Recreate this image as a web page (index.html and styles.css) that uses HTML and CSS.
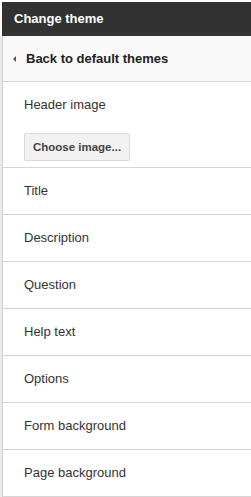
FILE: index.html
```html
<!DOCTYPE html>
<html>
<head>
<meta charset="utf-8">
<link rel="stylesheet" href="styles.css">
</head>
<body>
<div class="page">
  <div class="titlebar">Change theme</div>
  <div class="panel">
    <div class="gutter"></div>
    <div class="content">
      <div class="back"><span class="arrow"></span>Back to default themes</div>
      <div class="section header-image">
        <div class="label">Header image</div>
        <button class="btn">Choose image...</button>
      </div>
      <div class="row">Title</div>
      <div class="row">Description</div>
      <div class="row">Question</div>
      <div class="row">Help text</div>
      <div class="row">Options</div>
      <div class="row">Form background</div>
      <div class="row">Page background</div>
    </div>
  </div>
</div>
</body>
</html>
```
FILE: styles.css
```css
html, body {
  margin: 0;
  padding: 0;
  background: #fff;
}
body {
  font-family: Arial, "Liberation Sans", sans-serif;
  font-size: 13px;
  color: #333;
}
.page {
  padding-top: 2px;
  width: 251px;
}
.titlebar {
  margin-left: 2px;
  height: 34px;
  background: #323232;
  color: #fff;
  font-weight: bold;
  font-size: 13px;
  line-height: 34px;
  padding-left: 12px;
}
.panel {
  display: flex;
}
.gutter {
  width: 2px;
  background: #ebebeb;
  flex: none;
}
.content {
  flex: 1;
  border-left: 1px solid #d0d0d0;
}
.back {
  height: 45px;
  background: #f9f9f9;
  border-bottom: 1px solid #d6d6d6;
  display: flex;
  align-items: center;
  font-weight: bold;
  color: #222;
  padding-left: 10px;
}
.arrow {
  width: 0;
  height: 0;
  border-top: 3px solid transparent;
  border-bottom: 3px solid transparent;
  border-right: 3px solid #555;
  margin-right: 10px;
}
.section {
  border-bottom: 1px solid #d6d6d6;
}
.header-image {
  padding: 15px 0 6px 21px;
}
.label {
  line-height: 16px;
}
.btn {
  margin-top: 20px;
  height: 28px;
  width: 106px;
  padding: 0;
  font-family: Arial, "Liberation Sans", sans-serif;
  font-size: 11.5px;
  font-weight: bold;
  color: #444;
  background: #f2f2f2;
  border: 1px solid #d8d8d8;
  border-radius: 2px;
  display: block;
}
.row {
  height: 46px;
  line-height: 46px;
  padding-left: 21px;
  border-bottom: 1px solid #d6d6d6;
}
```
